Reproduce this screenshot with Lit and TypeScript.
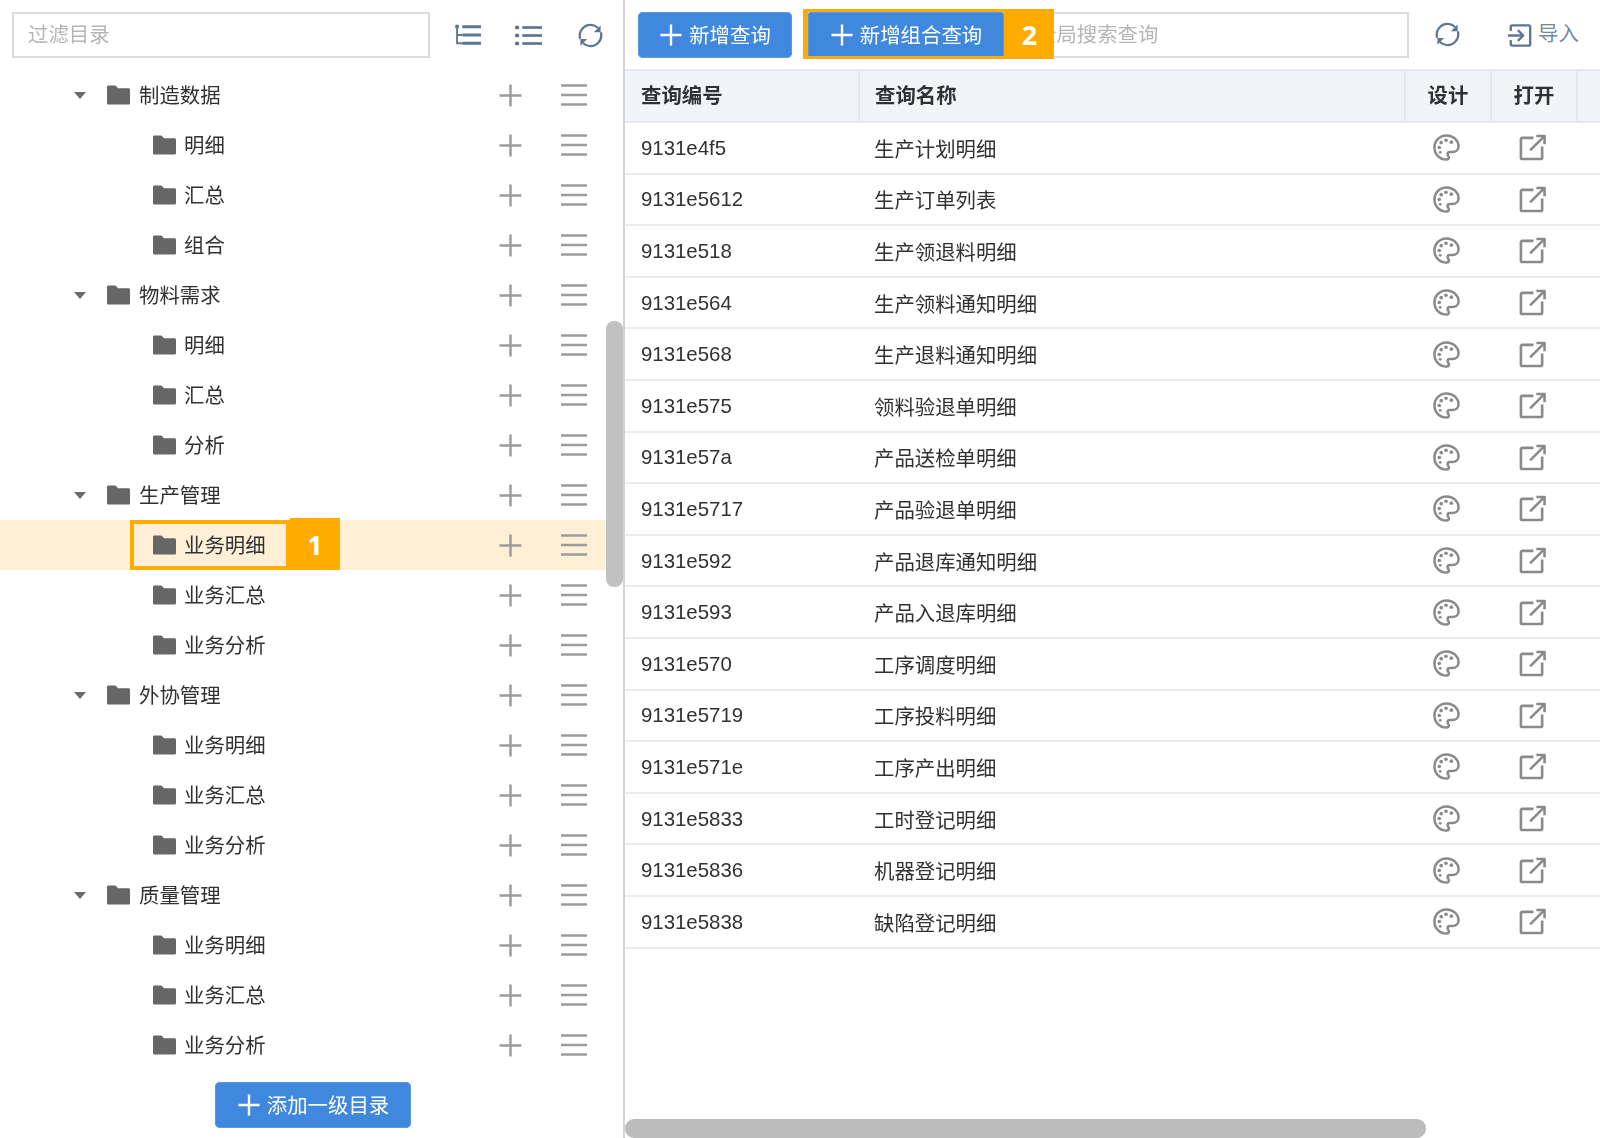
import { LitElement, html, css, svg } from "lit";
import { customElement } from "lit/decorators.js";

const plus = svg`<path d="M12 1.5v21M1.5 12h21" fill="none" stroke="currentColor" stroke-width="2.4"/>`;
const plusIcon = (cls: string) => html`<svg class=${cls} viewBox="0 0 24 24">${plus}</svg>`;
const menuIcon = html`<svg class="act menu" viewBox="0 0 26 24"><path d="M0 2.500h26M0 12h26M0 21.500h26" fill="none" stroke="currentColor" stroke-width="2.400"/></svg>`;
const folder = html`<svg class="folder" viewBox="0 0 24 20"><path d="M0 1.500C0 .7.700 0 1.500 0h6.700c.5 0 .9.200 1.200.6L11.500 3H22.500c.8 0 1.500.7 1.500 1.500V18.500c0 .8-.7 1.500-1.500 1.500H1.500C.7 20 0 19.300 0 18.500z" fill="currentColor"/></svg>`;
const caret = html`<svg class="caret" viewBox="0 0 12 7"><path d="M0 0h12L6 7z" fill="currentColor"/></svg>`;
const refresh = html`<svg class="tool" viewBox="0 0 28 28"><g fill="none" stroke="currentColor" stroke-width="2.400" stroke-linecap="round"><path d="M3 16.500C1.800 9.500 7 3 14 3c2.900 0 5.300 1 7.200 2.700"/><path d="M25 11.500C26.200 18.500 21 25 14 25c-2.900 0-5.300-1-7.200-2.700"/></g><path d="M24.500 3.500v7h-7zM3.500 24.500v-7h7z" fill="currentColor"/></svg>`;
const treeIcon = html`<svg class="tool" viewBox="0 0 26 24"><g fill="none" stroke="currentColor"><path d="M2 3v16.500h5M2 11.500h5" stroke-width="1.800"/><path d="M7 3.500h18M7 11.500h18M7 19.500h18" stroke-width="2.800"/></g><circle cx="2" cy="3.500" r="2" fill="currentColor"/></svg>`;
const listIcon = html`<svg class="tool" viewBox="0 0 26 24"><g fill="currentColor"><rect x="0" y="2.500" width="4" height="3.600" rx="1"/><rect x="0" y="10.200" width="4" height="3.600" rx="1"/><rect x="0" y="17.900" width="4" height="3.600" rx="1"/><rect x="7" y="3" width="19" height="2.600"/><rect x="7" y="10.700" width="19" height="2.600"/><rect x="7" y="18.400" width="19" height="2.600"/></g></svg>`;
const importIcon = html`<svg class="tool imp" viewBox="0 0 26 26"><g fill="none" stroke="currentColor" stroke-width="2.600" stroke-linecap="round" stroke-linejoin="round"><path d="M3 7V3.500C3 2.700 3.700 2 4.500 2h18c.8 0 1.500.7 1.500 1.500v19c0 .8-.7 1.500-1.500 1.500h-18c-.8 0-1.500-.7-1.500-1.500V19"/><path d="M1 13h15M11.500 8l5 5-5 5"/></g></svg>`;
const palette = html`<svg class="cell-icon" viewBox="0 0 28 28"><path d="M14 1.500C7 1.500 1.500 7 1.500 14S7 26.500 14 26.500c1.600 0 2.500-1 2.500-2.300 0-.7-.3-1.200-.7-1.700-.4-.5-.7-1-.7-1.600 0-1.300 1-2.200 2.300-2.200h2.800c3.300 0 6.300-2.200 6.300-5.700C26.500 6.500 21 1.500 14 1.500z" fill="none" stroke="currentColor" stroke-width="2.600"/><g fill="currentColor"><circle cx="6.500" cy="14" r="1.900"/><circle cx="8.500" cy="9" r="1.900"/><circle cx="13.500" cy="6.500" r="1.900"/><circle cx="19" cy="8.500" r="1.900"/><circle cx="7.500" cy="19" r="1.500"/></g></svg>`;
const external = html`<svg class="cell-icon" viewBox="0 0 28 28"><g fill="none" stroke="currentColor" stroke-width="2.700" stroke-linejoin="round"><path d="M15 4H3.500C2.700 4 2 4.700 2 5.500v19c0 .8.700 1.500 1.500 1.500h19c.8 0 1.500-.7 1.500-1.500V13"/><path d="M11.500 17 25.500 3"/><path d="M18 2h8.500v8.500" /></g></svg>`;

type Node = { label: string; level: number; selected?: boolean };
const groups: [string, string[]][] = [
  ["制造数据", ["明细", "汇总", "组合"]],
  ["物料需求", ["明细", "汇总", "分析"]],
  ["生产管理", ["业务明细", "业务汇总", "业务分析"]],
  ["外协管理", ["业务明细", "业务汇总", "业务分析"]],
  ["质量管理", ["业务明细", "业务汇总", "业务分析"]],
];
const nodes: Node[] = groups.flatMap(([g, kids]) => [
  { label: g, level: 0 },
  ...kids.map((k) => ({ label: k, level: 1, selected: g === "生产管理" && k === "业务明细" })),
]);
const rows: [string, string][] = [
  ["9131e4f5", "生产计划明细"],
  ["9131e5612", "生产订单列表"],
  ["9131e518", "生产领退料明细"],
  ["9131e564", "生产领料通知明细"],
  ["9131e568", "生产退料通知明细"],
  ["9131e575", "领料验退单明细"],
  ["9131e57a", "产品送检单明细"],
  ["9131e5717", "产品验退单明细"],
  ["9131e592", "产品退库通知明细"],
  ["9131e593", "产品入退库明细"],
  ["9131e570", "工序调度明细"],
  ["9131e5719", "工序投料明细"],
  ["9131e571e", "工序产出明细"],
  ["9131e5833", "工时登记明细"],
  ["9131e5836", "机器登记明细"],
  ["9131e5838", "缺陷登记明细"],
];

@customElement("app-root")
export class AppRoot extends LitElement {
  static styles = css`
    :host {
      display: block;
      width: 1600px;
      height: 1138px;
      overflow: hidden;
      background: #fff;
      color: #303133;
      font: 20.4px "Liberation Sans", "Noto Sans CJK SC", sans-serif;
    }
    .page { display: grid; grid-template-columns: 625px 1fr; height: 1138px; position: relative; }
    .left { border-right: 2px solid #d4d4d4; position: relative; display: flex; flex-direction: column; min-width: 0; }
    .filter-row { height: 70px; padding: 12px 0 0 12px; display: flex; align-items: flex-start; box-sizing: border-box; }
    input {
      box-sizing: border-box; height: 46px; border: 2px solid #dcdcdc; outline: none; background: #fff;
      font: inherit; padding: 0 14px; color: #303133;
    }
    input::placeholder { color: #b5b5b5; }
    .filter { width: 418px; }
    .tools { display: flex; margin-left: 25px; gap: 33px; align-items: center; height: 46px; }
    .tool { width: 27px; height: 27px; color: #5f7693; flex: none; }
    .tools .tool:last-child { margin-left: 2px; }
    .row { height: 50px; width: 606px; display: flex; align-items: center; box-sizing: border-box; padding-right: 19px; position: relative; }
    .row.on { background: #ffefd6; }
    .node { display: flex; align-items: center; height: 50px; box-sizing: border-box; position: relative; }
    .node span { padding-bottom: 2px; }
    .lv0 { padding-left: 74px; }
    .lv1 { padding-left: 153px; }
    .caret { width: 12px; height: 7px; color: #6a6a6a; margin-right: 21px; flex: none; }
    .folder { width: 23px; height: 20px; color: #666; margin-right: 9px; flex: none; }
    .lv1 .folder { margin-right: 8px; }
    .label { flex: 1; }
    .act { width: 25px; height: 25px; color: #9c9c9c; flex: none; }
    .menu { width: 26px; height: 24px; margin-left: 38px; }
    .mark { position: absolute; left: 130px; top: 0; width: 160px; height: 50px; box-sizing: border-box; border: 4px solid #ffab00; pointer-events: none; }
    .badge {
      position: absolute; background: #ffab00; color: #fff; font: bold 27px "Open Sans", "Liberation Sans", sans-serif;
      display: flex; align-items: center; justify-content: center; width: 50px;
    }
    .b1 { left: 290px; top: -2px; height: 52px; }
    .btn {
      background: #3f88de; color: #fff; border: 0; border-radius: 5px; display: inline-flex; align-items: center; justify-content: center;
      font: inherit; height: 46px; box-sizing: border-box; gap: 6px; padding: 0 0 2px; flex: none; box-shadow: inset 0 0 0 1px #5c9ae4;
    }
    .btn svg { width: 24px; height: 24px; margin-top: 2px; }
    .add-root { position: absolute; left: 215px; top: 1082px; width: 196px; padding-bottom: 3px; }
    .scroll-v { position: absolute; left: 606px; top: 321px; width: 17px; height: 266px; background: #c1c1c1; border-radius: 8px; }
    .right { min-width: 0; position: relative; overflow: hidden; }
    .toolbar { height: 69px; padding: 12px 0 0 13px; box-sizing: border-box; display: flex; align-items: flex-start; gap: 16px; }
    .q1 { width: 154px; }
    .combo { position: relative; flex: none; z-index: 2; }
    .q2 { width: 196px; border-radius: 3px; }
    .mark2 { position: absolute; left: -5px; top: -3px; right: 0; bottom: -1px; border: solid #ffab00; border-width: 3px 0 3px 5px; box-sizing: border-box; pointer-events: none; }
    .b2 { left: 196px; top: -3px; height: 50px; padding-left: 1px; box-sizing: border-box; }
    .search { width: 389px; }
    .refresh2 { margin: 9px 0 0 9px; }
    .import { margin: 9px 0 0 31px; display: flex; align-items: center; gap: 6px; color: #78879a; line-height: 27px; }
    .import .tool { width: 24px; }
    .import span { font-size: 20.4px; padding-bottom: 2px; }
    .head, .tr { display: grid; grid-template-columns: 235px 546px 86px 86px 1fr; }
    .head { height: 54px; background: #f2f4f8; border-top: 2px solid #e4e7ed; border-bottom: 2px solid #e4e7ed; box-sizing: border-box; font-weight: bold; }
    .head > div { display: flex; align-items: center; padding: 0 0 4px 15px; border-right: 2px solid #e4e7ed; box-sizing: border-box; }
    .head > div:first-child { padding-left: 16px; }
    .head > div:last-child { border-right: 0; }
    .head > .c { justify-content: center; padding: 0 0 4px; }
    .tr { height: 51.600px; border-bottom: 2px solid #ebebeb; box-sizing: border-box; }
    .tr > div { display: flex; align-items: center; padding-left: 14px; }
    .tr > .id { padding: 1px 0 0 16px; }
    .tr > .c { justify-content: center; padding: 0 5px 0 0; }
    .cell-icon { width: 27px; height: 27px; color: #8a8a8a; }
    .scroll-h { position: absolute; left: 0; top: 1119px; width: 801px; height: 19px; background: #bcbcbc; border-radius: 9px; }
    /* the reference is a slightly upscaled capture: its text and icons are soft, its numbered marks crisp */
    .node span, .folder, .caret, .act, .tool, .cell-icon, .tr > div, .head > div, input, .btn { filter: blur(0.45px); }
  `;

  render() {
    return html`<div class="page">
      <section class="left">
        <div class="filter-row">
          <input class="filter" placeholder="过滤目录" />
          <div class="tools">${treeIcon}${listIcon}${refresh}</div>
        </div>
        ${nodes.map(
          (n) => html`<div class="row ${n.selected ? "on" : ""}">
            <div class="node label ${n.level ? "lv1" : "lv0"}">
              ${n.level ? "" : caret}${folder}<span>${n.label}</span>
            </div>
            ${n.selected ? html`<div class="mark"></div><div class="badge b1">1</div>` : ""}
            ${plusIcon("act")}${menuIcon}
          </div>`
        )}
        <div class="scroll-v"></div>
        <button class="btn add-root">${plusIcon("")}添加一级目录</button>
      </section>
      <section class="right">
        <div class="toolbar">
          <button class="btn q1">${plusIcon("")}新增查询</button>
          <div class="combo">
            <button class="btn q2">${plusIcon("")}新增组合查询</button>
            <div class="mark2"></div>
            <div class="badge b2">2</div>
          </div>
          <input class="search" placeholder="全局搜索查询" />
          <div class="refresh2">${refresh}</div>
          <div class="import">${importIcon}<span>导入</span></div>
        </div>
        <div class="head">
          <div>查询编号</div><div>查询名称</div><div class="c">设计</div><div class="c">打开</div><div></div>
        </div>
        ${rows.map(
          ([id, name]) => html`<div class="tr">
            <div class="id">${id}</div><div>${name}</div><div class="c">${palette}</div><div class="c">${external}</div><div></div>
          </div>`
        )}
        <div class="scroll-h"></div>
      </section>
    </div>`;
  }
}
